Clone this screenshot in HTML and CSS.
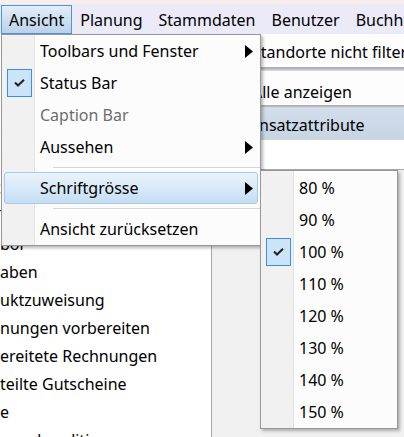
FILE: index.html
```html
<!DOCTYPE html>
<html lang="de">
<head>
<meta charset="utf-8">
<title>Ansicht Menü</title>
<link rel="stylesheet" href="styles.css">
</head>
<body>
<div class="app">
  <div class="topstrip"></div>
  <nav class="menubar">
    <span class="mi active">Ansicht</span>
    <span class="mi">Planung</span>
    <span class="mi">Stammdaten</span>
    <span class="mi">Benutzer</span>
    <span class="mi">Buchhaltung</span>
  </nav>
  <div class="main">
    <aside class="tree">
      <div class="trow">Übersicht</div>
      <div class="trow">Kalender</div>
      <div class="trow">Einsätze</div>
      <div class="trow">Mitarbeiter</div>
      <div class="trow">Kunden</div>
      <div class="trow">Standorte</div>
      <div class="trow">Termine</div>
      <div class="trow">bor</div>
      <div class="trow">aben</div>
      <div class="trow">uktzuweisung</div>
      <div class="trow">nungen vorbereiten</div>
      <div class="trow">ereitete Rechnungen</div>
      <div class="trow">teilte Gutscheine</div>
      <div class="trow">e</div>
      <div class="trow">ungskonditionen</div>
    </aside>
    <section class="panel">
      <div class="prow r1">Standorte nicht filtern</div>
      <div class="bar"></div>
      <div class="prow r2">Alle anzeigen</div>
      <div class="bar thin"></div>
      <div class="phead">Einsatzattribute</div>
      <div class="pwhite"></div>
      <div class="pgray"></div>
    </section>
  </div>

  <div class="menu dropdown">
    <div class="item"><span class="chk"></span><span class="lbl">Toolbars und Fenster</span><span class="arr"><svg width="8" height="13" viewBox="0 0 8 13"><polygon points="0,0 8,6.5 0,13" fill="#000"/></svg></span></div>
    <div class="item"><span class="chk"><span class="box"><svg width="11" height="8" viewBox="0 0 11 8"><path d="M1 3.5 L4 6.5 L10 0.8" fill="none" stroke="#222" stroke-width="2"/></svg></span></span><span class="lbl">Status Bar</span></div>
    <div class="item disabled"><span class="chk"></span><span class="lbl">Caption Bar</span></div>
    <div class="item"><span class="chk"></span><span class="lbl">Aussehen</span><span class="arr"><svg width="8" height="13" viewBox="0 0 8 13"><polygon points="0,0 8,6.5 0,13" fill="#000"/></svg></span></div>
    <div class="sep"></div>
    <div class="item hl"><span class="chk"></span><span class="lbl">Schriftgrösse</span><span class="arr"><svg width="8" height="13" viewBox="0 0 8 13"><polygon points="0,0 8,6.5 0,13" fill="#000"/></svg></span></div>
    <div class="sep"></div>
    <div class="item"><span class="chk"></span><span class="lbl">Ansicht zurücksetzen</span></div>
  </div>

  <div class="menu submenu">
    <div class="item"><span class="chk"></span><span class="lbl">80 %</span></div>
    <div class="item"><span class="chk"></span><span class="lbl">90 %</span></div>
    <div class="item"><span class="chk"><span class="box"><svg width="11" height="8" viewBox="0 0 11 8"><path d="M1 3.5 L4 6.5 L10 0.8" fill="none" stroke="#222" stroke-width="2"/></svg></span></span><span class="lbl">100 %</span></div>
    <div class="item"><span class="chk"></span><span class="lbl">110 %</span></div>
    <div class="item"><span class="chk"></span><span class="lbl">120 %</span></div>
    <div class="item"><span class="chk"></span><span class="lbl">130 %</span></div>
    <div class="item"><span class="chk"></span><span class="lbl">140 %</span></div>
    <div class="item"><span class="chk"></span><span class="lbl">150 %</span></div>
  </div>
</div>
</body>
</html>
```
FILE: styles.css
```css
html, body {
  margin: 0;
  padding: 0;
}
body {
  font-family: "Noto Sans", "Open Sans", sans-serif;
  font-size: 16px;
  color: #000;
  background: #fff;
}
.app {
  position: relative;
  width: 404px;
  height: 437px;
  overflow: hidden;
}
.topstrip {
  height: 4px;
  background: #f9eeee;
}
.menubar {
  height: 30px;
  background: #eaeaf9;
  display: flex;
  align-items: stretch;
  padding-left: 1px;
  white-space: nowrap;
}
.mi {
  display: flex;
  align-items: center;
  padding: 0 7px;
  box-sizing: border-box;
  border: 1px solid transparent;
  border-bottom: 0;
  margin-top: 1px;
}
.mi.active {
  border-color: #4b94e0;
  border-bottom: 1px solid #4b94e0;
  background: linear-gradient(to bottom, #e4edf8 0%, #cfdff0 50%, #bcd2ea 100%);
}
.main {
  display: flex;
  height: 403px;
}
.tree {
  width: 211px;
  flex: none;
  border-right: 1px solid #a9a9a9;
  background: #fff;
  overflow: hidden;
  white-space: nowrap;
}
.trow {
  height: 28px;
  line-height: 28px;
}
.panel {
  flex: 1;
  display: flex;
  flex-direction: column;
  background: #f0f0f0;
  white-space: nowrap;
  overflow: hidden;
}
.prow {
  padding-left: 40px;
  display: flex;
  align-items: center;
  background: #fdfdfe;
  box-sizing: border-box;
}
.r1 {
  height: 33px;
  padding-top: 2px;
}
.r2 {
  height: 34px;
  padding-top: 7px;
}
.bar {
  height: 4px;
  background: linear-gradient(to bottom, #a9a9b9 0%, #b8b8c6 50%, #e2e2ea 100%);
}
.bar.thin {
  height: 3px;
}
.phead {
  height: 32px;
  padding-left: 34px;
  padding-top: 2px;
  box-sizing: border-box;
  display: flex;
  align-items: center;
  background: linear-gradient(to bottom, #d2deea, #c6d4e4);
  border-bottom: 1px solid #d6d6d6;
}
.pwhite {
  height: 29px;
  background: #fff;
  border-bottom: 1px solid #a8a8a8;
}
.pgray {
  flex: 1;
  background: #f0f0f0;
}

/* menus */
.menu {
  position: absolute;
  box-sizing: border-box;
  border: 1px solid #979797;
  background: linear-gradient(to right, #f1f1f1 0 32px, #e2e2e2 32px 33px, #ffffff 33px 34px, #fcfcfc 34px);
  box-shadow: 2px 2px 3px rgba(0, 0, 0, 0.28);
  padding: 0;
  white-space: nowrap;
}
.dropdown {
  left: 1px;
  top: 34px;
  width: 260px;
  height: 212px;
}
.submenu {
  left: 260px;
  top: 170px;
  width: 138px;
  height: 259px;
  padding-top: 1px;
}
.item {
  height: 32px;
  margin: 0 2px;
  box-sizing: border-box;
  display: flex;
  align-items: center;
  border: 1px solid transparent;
  border-radius: 3px;
}
.item.disabled {
  color: #6d6d6d;
}
.item.hl {
  border-color: #a6c9ec;
  background: linear-gradient(to bottom, #eaf3fc 0%, #d9e9f8 50%, #c4ddf4 100%);
}
.chk {
  width: 31px;
  flex: none;
  display: flex;
  align-items: center;
  height: 100%;
}
.box {
  margin-left: 2px;
  width: 25px;
  height: 28px;
  box-sizing: border-box;
  border: 1px solid #3d8ee6;
  background: #cce4f7;
  display: flex;
  align-items: center;
  justify-content: center;
}
.lbl {
  padding-left: 4px;
  flex: 1;
}
.arr {
  display: flex;
  align-items: center;
  padding-right: 4px;
}
.sep {
  height: 9px;
  margin-left: 51px;
  display: flex;
  align-items: center;
}
.sep::before {
  content: "";
  display: block;
  width: 100%;
  height: 1px;
  background: #d7d7d7;
  box-shadow: 0 1px 0 #fff;
}
```
